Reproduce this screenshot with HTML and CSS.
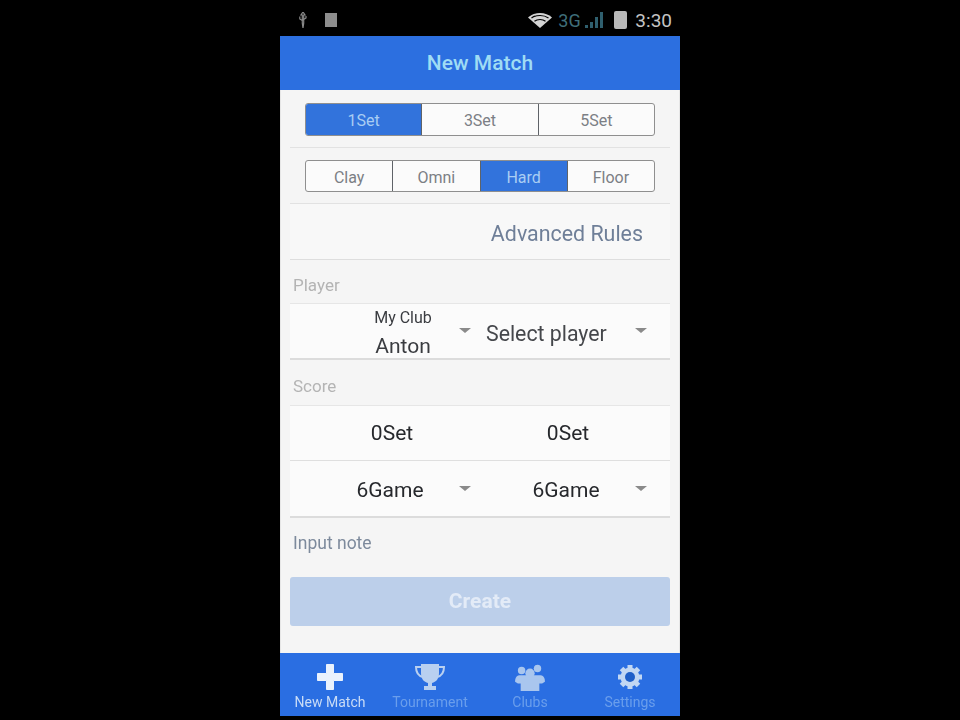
FILE: index.html
```html
<!DOCTYPE html>
<html lang="en">
<head>
<meta charset="utf-8">
<title>New Match</title>
<link rel="stylesheet" href="styles.css">
</head>
<body>
<main class="phone">
  <div class="status">
    <div class="status-left">
      <svg class="usb" viewBox="0 0 10 16" width="10" height="16"><path d="M5 0 7 3H5.700v8.200L5 16l-.7-4.800V3H3zM5 9 1.800 7V4.500M5 8l3-2V4" fill="none" stroke="#8a8a8a" stroke-width="1.200"/></svg>
      <span class="sd"></span>
    </div>
    <div class="status-right">
      <svg class="wifi" viewBox="0 0 24 15" width="24" height="15"><path d="M12 15 0 4.500C3 1.500 7.500 0 12 0s9 1.500 12 4.500z" fill="#d4d4d4"/><path d="M3.500 5C6 3.200 9 2.500 12 2.500s6 .7 8.500 2.500M6.500 8.200C8 7 10 6.500 12 6.500s4 .5 5.500 1.700" fill="none" stroke="#000" stroke-width="1.200"/></svg>
      <span class="net">3G</span>
      <span class="signal"><i class="b1"></i><i class="b2"></i><i class="b3"></i><i class="b4"></i></span>
      <span class="battery"></span>
      <span class="clock">3:30</span>
    </div>
  </div>
  <header class="title-bar">New Match</header>
  <section class="content">
    <div class="seg-row first">
      <div class="seg">
        <span class="on">1Set</span><span>3Set</span><span>5Set</span>
      </div>
    </div>
    <div class="seg-row">
      <div class="seg second">
        <span>Clay</span><span>Omni</span><span class="on">Hard</span><span>Floor</span>
      </div>
    </div>
    <div class="advanced">Advanced Rules</div>
    <div class="label player-label">Player</div>
    <div class="card">
      <div class="row player-row">
        <div class="cell club"><small>My Club</small><b>Anton</b><i class="caret"></i></div>
        <div class="cell select">Select player<i class="caret"></i></div>
      </div>
    </div>
    <div class="label score-label">Score</div>
    <div class="card">
      <div class="row set-row">
        <div class="cell">0Set</div>
        <div class="cell">0Set</div>
      </div>
      <div class="row game-row">
        <div class="cell">6Game<i class="caret"></i></div>
        <div class="cell">6Game<i class="caret"></i></div>
      </div>
    </div>
    <div class="note">Input note</div>
    <button class="create" type="button">Create</button>
  </section>
  <nav class="tabs">
    <div class="tab active">
      <svg viewBox="0 0 28 28" width="28" height="28"><path d="M10.500 1.500h7v9h9v7h-9v9h-7v-9h-9v-7h9z" fill="#eaf2fd" stroke="#eaf2fd" stroke-linejoin="round" stroke-width="1"/></svg>
      <span>New Match</span>
    </div>
    <div class="tab">
      <svg viewBox="0 0 32 28" width="32" height="28"><path d="M7 1h18v9c0 6-3 9-7 10v3h4v4H10v-4h4v-3c-4-1-7-4-7-10z" fill="#b9d0f0"/><path d="M8 4H2c0 6 3 9 7 10M24 4h6c0 6-3 9-7 10" fill="none" stroke="#b9d0f0" stroke-width="2"/></svg>
      <span>Tournament</span>
    </div>
    <div class="tab">
      <svg viewBox="0 0 34 30" width="34" height="30"><g fill="#a9c6ee"><circle cx="8" cy="8" r="4"/><circle cx="25" cy="6" r="4"/><circle cx="17" cy="11" r="5"/><path d="M1 20c0-5 2-7 6-7h20c4 0 6 2 6 7l-3 2H4z"/><path d="M7 18h20v12H7z"/></g></svg>
      <span>Clubs</span>
    </div>
    <div class="tab">
      <svg viewBox="0 0 26 26" width="26" height="26"><g fill="#c2d7f3"><circle cx="13" cy="13" r="9.500"/><path d="M10.500 1h5v5h-5zM10.500 20h5v5h-5zM1 10.500h5v5H1zM20 10.500h5v5h-5z"/><path d="M10.500 1h5v5h-5zM10.500 20h5v5h-5zM1 10.500h5v5H1zM20 10.500h5v5h-5z" transform="rotate(45 13 13)"/></g><circle cx="13" cy="13" r="5" fill="#1f5fc8"/></svg>
      <span>Settings</span>
    </div>
  </nav>
</main>
</body>
</html>
```
FILE: styles.css
```css
* { box-sizing: border-box; }
html, body { margin: 0; height: 100%; background: #000; }
body { font-family: Roboto, "Liberation Sans", sans-serif; }
.phone { width: 400px; height: 716px; margin: 0 auto; display: flex; flex-direction: column; filter: blur(0.5px); }

.status { height: 36px; flex: none; background: #000; display: flex; justify-content: space-between; align-items: center; padding: 4px 8px 0 18px; }
.status-left, .status-right { display: flex; align-items: center; }
.status-left { gap: 17px; }
.sd { width: 12px; height: 14px; background: #8d8d8d; display: block; }
.wifi { margin-right: 6px; }
.net { color: #3f6f7a; font-size: 18px; width: 27px; }
.signal { display: flex; align-items: flex-end; gap: 2px; height: 16px; width: 20px; margin-right: 9px; }
.signal i { display: block; width: 3px; background: #2f5f6e; }
.b1 { height: 3px; } .b2 { height: 6px; } .b3 { height: 11px; } .b4 { height: 16px; }
.battery { width: 13px; height: 18px; background: #b9b9b9; border-radius: 2px; margin-right: 8px; }
.clock { color: #c4c4c4; font-size: 19px; }

.title-bar { height: 54px; flex: none; background: #2c6fe0; color: #9fdcf4; font-size: 21px; font-weight: 500; display: flex; align-items: center; justify-content: center; }

.content { flex: 1; background: #f5f5f5; padding: 0 9px; display: flex; flex-direction: column; border-left: 1px solid #e6e6e6; border-right: 1px solid #e6e6e6; min-height: 0; }

.seg-row { height: 56px; padding: 12px 15px 0; border-bottom: 1px solid #e2e2e2; }
.seg-row.first { height: 58px; padding-top: 13px; }
.seg { height: 33px; display: flex; border: 1px solid #8f8f8f; border-radius: 3px; overflow: hidden; background: #fbfbfb; }
.seg.second { height: 32px; }
.seg span { flex: 1; display: flex; align-items: center; justify-content: center; padding-top: 1px; color: #7c7f85; font-size: 16px; border-left: 1px solid #5f6368; }
.seg.second span { padding-top: 2px; }
.seg span:first-child { border-left: 0; }
.seg span.on { background: #3273dc; color: #a9cdf3; }

.advanced { height: 56px; flex: none; display: flex; align-items: center; justify-content: flex-end; padding: 4px 27px 0 0; font-size: 21.400px; color: #6f7f98; background: #f8f8f8; border-bottom: 1px solid #dedede; }

.label { font-size: 17px; color: #b4b4b4; padding-left: 3px; }
.player-label { height: 43px; padding-top: 15px; }
.score-label { height: 45px; padding-top: 16px; }
.card { background: #fbfbfb; flex: none; border-bottom: 2px solid #dcdcdc; border-top: 1px solid #e6e6e6; }
.row { display: flex; padding: 0 14px; }
.cell { flex: 0 0 50%; position: relative; display: flex; flex-direction: column; align-items: center; justify-content: center; font-size: 21px; color: #26282c; }
.player-row { height: 54px; }
.club { padding: 6px 0 0 22px; }
.club small { font-size: 16px; line-height: 20px; color: #3a3c40; }
.club b { font-weight: 400; font-size: 21px; line-height: 28px; margin-top: 4px; color: #3a3c40; }
.select { color: #45474b; align-items: flex-start; padding: 4px 0 0 6px; font-size: 21.300px; }
.set-row { height: 55px; border-bottom: 1px solid #dfdfdf; }
.game-row { height: 55px; padding-top: 3px; }
.game-row .cell { padding-right: 4px; }
.caret { position: absolute; right: 9px; top: 50%; margin-top: -3px; width: 0; height: 0; border-left: 6px solid transparent; border-right: 6px solid transparent; border-top: 5px solid #8a8a8a; }
.game-row .caret { margin-top: -4px; }

.note { height: 59px; flex: none; padding: 15px 0 0 3px; font-size: 17.500px; color: #7d8a9c; }
.create { height: 49px; flex: none; border: 0; border-radius: 3px; padding: 0 0 2px; background: #bccfea; color: #e3ebf7; font: 700 21px Roboto, "Liberation Sans", sans-serif; }

.tabs { height: 63px; flex: none; background: #2a6ee2; display: flex; padding-top: 10px; }
.tab { flex: 1; display: flex; flex-direction: column; align-items: center; justify-content: flex-start; }
.tab svg { height: 28px; flex: none; }
.tab span { font-size: 14px; line-height: 16px; color: #6a9eec; margin-top: 3px; white-space: nowrap; }
.tab.active span { color: #c9dcf6; }
```
